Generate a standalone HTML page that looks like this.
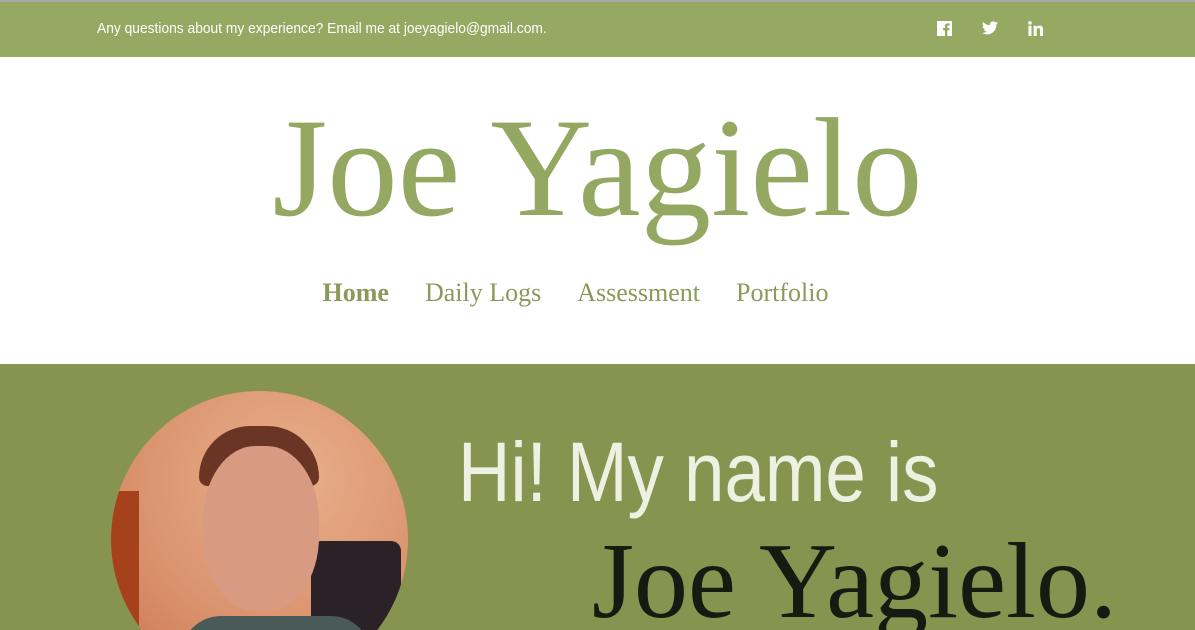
<!DOCTYPE html>
<html><head><style>
*{margin:0;padding:0;box-sizing:border-box}
html,body{width:1195px;height:630px;overflow:hidden}
body{background:#fff;font-family:"Liberation Sans",sans-serif;position:relative}
.top{position:absolute;left:0;top:0;width:1195px;height:57px;background:#95a962;border-top:2px solid #a8a8a8}
.top .t{position:absolute;left:97px;top:18px;color:#fff;font-size:15px;transform:scaleX(0.92);transform-origin:left;white-space:nowrap}
.ic{position:absolute;top:19px;fill:#fff}
.title{position:absolute;left:0;width:1195px;top:84px;text-align:center;font-family:"Liberation Serif",serif;font-size:141px;color:#94a862;line-height:1.2;white-space:nowrap}
.nav{position:absolute;top:278px;left:-22px;width:1195px;text-align:center;font-family:"Liberation Serif",serif;font-size:26px;color:#8a9a5b}
.nav span{margin:0 18px}
.hero{position:absolute;top:364px;left:0;width:1195px;height:266px;background:#879450;overflow:hidden}
.photo{position:absolute;left:111px;top:27px;width:297px;height:297px;border-radius:50%;overflow:hidden;background:radial-gradient(circle at 60% 30%,#e8b08c,#d9906a 60%,#c8704c)}
.hi{position:absolute;left:458px;top:60px;color:#eef0e2;font-size:84px;transform:scaleX(0.865);transform-origin:left;white-space:nowrap}
.name{position:absolute;left:592px;top:156px;color:#161a10;font-family:"Liberation Serif",serif;font-size:108px;white-space:nowrap}
</style></head><body>
<div class="top"><div class="t">Any questions about my experience? Email me at joeyagielo@gmail.com.</div>
<svg class="ic" style="left:937px" width="15" height="15" viewBox="0 0 16 16"><path d="M0 0h16v16H11V10h2l.3-2.5H11V6c0-.7.2-1.2 1.2-1.2h1.3V2.6c-.3 0-1-.1-1.9-.1-1.9 0-3.1 1.1-3.1 3.2V7.5H6.5V10h2v6H0z"/></svg>
<svg class="ic" style="left:982px" width="16" height="14" viewBox="0 0 24 20"><path d="M24 2.4c-.9.4-1.8.7-2.8.8 1-.6 1.8-1.6 2.2-2.7-1 .6-2 1-3.1 1.2C19.4.7 18.1 0 16.6 0c-2.7 0-4.9 2.2-4.9 4.9 0 .4 0 .8.1 1.1C7.7 5.8 4.1 3.9 1.7.9c-.4.7-.7 1.6-.7 2.5 0 1.7.9 3.2 2.2 4.1-.8 0-1.6-.2-2.2-.6v.1c0 2.4 1.7 4.4 3.9 4.8-.4.1-.8.2-1.3.2-.3 0-.6 0-.9-.1.6 2 2.4 3.4 4.6 3.4-1.7 1.3-3.8 2.1-6.1 2.1-.4 0-.8 0-1.2-.1C2.2 18.8 4.8 19.6 7.5 19.6c9.1 0 14-7.5 14-14v-.6c1-.7 1.8-1.6 2.5-2.6z"/></svg>
<svg class="ic" style="left:1028px" width="15" height="15" viewBox="0 0 16 16"><rect x="0.5" y="5" width="3.2" height="11"/><circle cx="2.1" cy="2" r="1.9"/><path d="M6 5h3v1.6C9.5 5.7 10.6 4.8 12.3 4.8 15 4.8 16 6.4 16 9.3V16h-3.2v-6c0-1.4-.3-2.5-1.6-2.5s-2 .9-2 2.5v6H6z"/></svg>
</div>
<div class="title">Joe Yagielo</div>
<div class="nav"><span style="font-weight:bold">Home</span><span>Daily Logs</span><span>Assessment</span><span>Portfolio</span></div>
<div class="hero">
<div class="photo">
<div style="position:absolute;left:0;top:100px;width:28px;height:200px;background:#a5421c"></div>
<div style="position:absolute;left:200px;top:150px;width:90px;height:160px;background:#2a2226;border-radius:10px"></div>
<div style="position:absolute;left:88px;top:35px;width:120px;height:60px;background:#6a3524;border-radius:60px 60px 10px 10px"></div>
<div style="position:absolute;left:92px;top:55px;width:116px;height:165px;background:#d99a82;border-radius:45%"></div>
<div style="position:absolute;left:70px;top:225px;width:190px;height:80px;background:#4a5a56;border-radius:40px 40px 0 0"></div>
</div>
<div class="hi">Hi! My name is</div>
<div class="name">Joe Yagielo.</div>
</div>
</body></html>
